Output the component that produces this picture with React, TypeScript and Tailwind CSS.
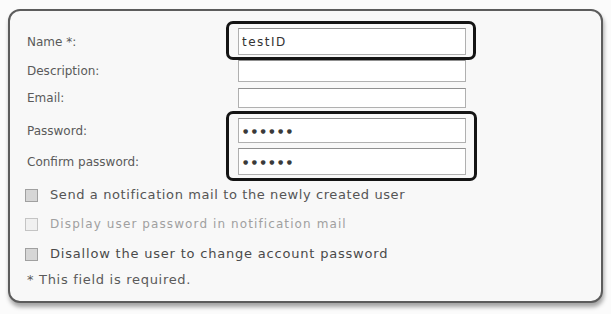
import React from "react";

const font = { fontFamily: '"DejaVu Sans", Verdana, sans-serif' };

function Row({ label, h, mt, children }: { label: string; h: string; mt: string; children?: React.ReactNode }) {
  return (
    <div className={`flex items-center ${h} ${mt}`}>
      <div className="w-[211px] text-[12px] text-[#5a5a5a]">{label}</div>
      <div className="w-[228px] h-full bg-white border border-[#b0b0b0] border-t-[#909090] flex items-center pl-[3px] text-[12px] text-[#333]">
        {children}
      </div>
    </div>
  );
}

function Check({ text, mt, tone, box }: { text: string; mt: string; tone: string; box: string }) {
  return (
    <div className={`flex items-center h-[20px] ${mt}`}>
      <div className={`w-[13px] h-[13px] border ${box}`} />
      <div className={`ml-[12px] whitespace-nowrap ${tone}`}>{text}</div>
    </div>
  );
}

export default function App() {
  return (
    <div className="relative w-[611px] h-[314px] bg-[#fbfbfb] overflow-hidden" style={font}>
      <div className="ml-[8px] pt-[9px]">
        <div className="w-[595px] h-[294px] border-2 border-[#5c5c5c] rounded-[12px] bg-[#f8f8f8] shadow-[1px_4px_4px_rgba(0,0,0,0.35)] pt-[17px] pl-[17px]">
          <Row label="Name *:" h="h-[27px]" mt="mt-0">
            <span className="tracking-[1.5px]">testID</span>
          </Row>
          <Row label="Description:" h="h-[22px]" mt="mt-[5px]" />
          <Row label="Email:" h="h-[20px]" mt="mt-[6px]" />
          <Row label="Password:" h="h-[25px]" mt="mt-[10px]">
            <span className="text-[6px] tracking-[3.5px] text-[#3a3a3a] ml-[1px]">●●●●●●</span>
          </Row>
          <Row label="Confirm password:" h="h-[27px]" mt="mt-[5px]">
            <span className="text-[6px] tracking-[3.5px] text-[#3a3a3a] ml-[1px]">●●●●●●</span>
          </Row>
          <div className="-ml-[2px]">
            <Check
              text="Send a notification mail to the newly created user"
              mt="mt-[10px]"
              tone="text-[13px] tracking-[0.6px] text-[#555]"
              box="bg-[#d6d6d6] border-[#a0a0a0]"
            />
            <Check
              text="Display user password in notification mail"
              mt="mt-[9px]"
              tone="text-[12px] tracking-[1.1px] text-[#a0a0a0]"
              box="bg-[#f0f0f0] border-[#c4c4c4]"
            />
            <Check
              text="Disallow the user to change account password"
              mt="mt-[10px]"
              tone="text-[13px] tracking-[0.8px] text-[#4a4a4a]"
              box="bg-[#d6d6d6] border-[#a0a0a0]"
            />
          </div>
          <div className="mt-[6px] h-[20px] flex items-center text-[13px] tracking-[0.7px] text-[#5a5a5a]">* This field is required.</div>
        </div>
      </div>
      <div className="absolute left-[226px] top-[21px] w-[250px] h-[39px] border-[3px] border-[#141414] rounded-[7px]" />
      <div className="absolute left-[226px] top-[111px] w-[251px] h-[70px] border-[3px] border-[#141414] rounded-[7px]" />
    </div>
  );
}
